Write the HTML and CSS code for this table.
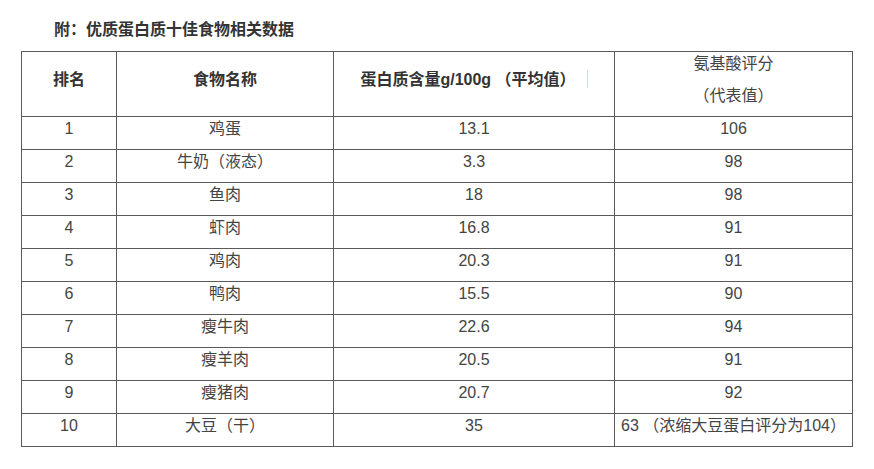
FILE: index.html
```html
<!DOCTYPE html>
<html lang="zh-CN">
<head>
<meta charset="utf-8">
<title>优质蛋白质十佳食物相关数据</title>
<link rel="stylesheet" href="styles.css">
</head>
<body>
<h3 class="title">附：优质蛋白质十佳食物相关数据</h3>
<table class="data">
  <colgroup>
    <col class="c1"><col class="c2"><col class="c3"><col class="c4">
  </colgroup>
  <thead>
    <tr>
      <th>排名</th>
      <th>食物名称</th>
      <th>蛋白质含量g/100g （平均值）<span class="caret"></span></th>
      <th><div class="hl">氨基酸评分</div><div class="hl hl2">（代表值）</div></th>
    </tr>
  </thead>
  <tbody>
    <tr><td>1</td><td>鸡蛋</td><td>13.1</td><td>106</td></tr>
    <tr><td>2</td><td>牛奶（液态）</td><td>3.3</td><td>98</td></tr>
    <tr><td>3</td><td>鱼肉</td><td>18</td><td>98</td></tr>
    <tr><td>4</td><td>虾肉</td><td>16.8</td><td>91</td></tr>
    <tr><td>5</td><td>鸡肉</td><td>20.3</td><td>91</td></tr>
    <tr><td>6</td><td>鸭肉</td><td>15.5</td><td>90</td></tr>
    <tr><td>7</td><td>瘦牛肉</td><td>22.6</td><td>94</td></tr>
    <tr><td>8</td><td>瘦羊肉</td><td>20.5</td><td>91</td></tr>
    <tr><td>9</td><td>瘦猪肉</td><td>20.7</td><td>92</td></tr>
    <tr><td>10</td><td>大豆（干）</td><td>35</td><td>63 （浓缩大豆蛋白评分为104）</td></tr>
  </tbody>
</table>
</body>
</html>
```

FILE: styles.css
```css
html, body {
  margin: 0;
  padding: 0;
  background: #ffffff;
}

body {
  font-family: "Liberation Sans", Arial, "Noto Sans CJK SC", sans-serif;
  font-size: 16px;
  color: #444444;
}

.title {
  margin: 0;
  padding: 18px 0 0 54px;
  height: 33px;
  line-height: 24px;
  font-size: 16px;
  font-weight: bold;
  color: #333333;
}

.data {
  margin-left: 21px;
  border-collapse: collapse;
  table-layout: fixed;
  width: 832px;
}

.c1 { width: 95px; }
.c2 { width: 217px; }
.c3 { width: 281px; }
.c4 { width: 238px; }

.data th,
.data td {
  border: 1px solid #5a5a5a;
  padding: 0;
  text-align: center;
  line-height: 24px;
  white-space: nowrap;
  overflow: hidden;
}

.data th {
  height: 56px;
  padding-bottom: 8px;
  vertical-align: middle;
  font-weight: bold;
  color: #333333;
}

.data td {
  height: 32px;
  vertical-align: top;
}

.hl {
  font-weight: normal;
  color: #444444;
  height: 24px;
}

.hl2 {
  margin-top: 8px;
}

.caret {
  display: inline-block;
  width: 1px;
  height: 18px;
  margin-left: 11px;
  vertical-align: -3px;
  background: #cddcea;
}
```
